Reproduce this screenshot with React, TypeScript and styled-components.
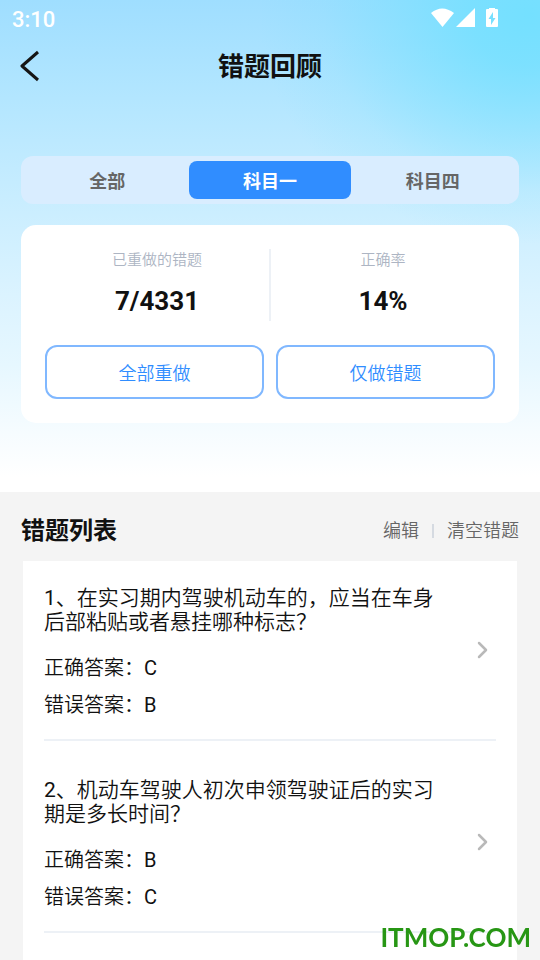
import React, { useState } from 'react';
import styled, { createGlobalStyle } from 'styled-components';

const GlobalStyle = createGlobalStyle`
  * { box-sizing: border-box; }
  body {
    margin: 0;
    background: #f4f4f4;
    color: #111;
    font-family: Roboto, 'Noto Sans CJK SC', sans-serif;
    font-weight: 350;
  }
  h1, h2, p, ul, ol, dl, dd { margin: 0; padding: 0; }
  button { border: 0; padding: 0; background: none; color: inherit; font: inherit; cursor: pointer; }
`;

const Screen = styled.div`
  height: 100vh;
  display: flex;
  flex-direction: column;
  overflow: hidden;
`;

const Hero = styled.header`
  flex: none;
  padding-bottom: 69px;
  background:
    radial-gradient(ellipse 270px 230px at 98% 3%, #74e0ff 0%, rgba(116, 224, 255, 0.85) 22%, rgba(116, 224, 255, 0.5) 48%, rgba(116, 224, 255, 0.15) 76%, rgba(116, 224, 255, 0) 100%),
    linear-gradient(180deg, #9fdeff 0%, #b3e6ff 20%, #c8edff 40%, #dbf3ff 60%, #e6f7ff 74%, #f6fcff 88%, #fff 97%);
`;

const StatusBar = styled.div`
  display: flex;
  justify-content: space-between;
  align-items: center;
  height: 38px;
  padding: 0 42px 0 12px;
  color: #fff;
  font-size: 22px;
  font-weight: 500;
`;

const StatusIcons = styled.svg`
  display: block;
  width: 68px;
  height: 22px;
`;

const NavBar = styled.div`
  display: grid;
  grid-template-columns: 60px 1fr 60px;
  align-items: center;
  height: 56px;
`;

const BackButton = styled.button`
  display: flex;
  padding-left: 20px;
  svg { display: block; }
`;

const Title = styled.h1`
  text-align: center;
  padding-top: 2px;
  font-size: 26px;
  line-height: 32px;
  font-weight: 700;
`;

const Tabs = styled.div`
  display: grid;
  grid-template-columns: repeat(3, 1fr);
  margin: 62px 21px 21px;
  padding: 5px;
  border-radius: 12px;
  background: #d9edff;
`;

const Tab = styled.button<{ $active: boolean }>`
  height: 38px;
  border-radius: 8px;
  font-size: 18px;
  font-weight: 700;
  color: ${({ $active }) => ($active ? '#fff' : '#666')};
  background: ${({ $active }) => ($active ? '#308dff' : 'transparent')};
`;

const Card = styled.section`
  margin: 0 21px;
  padding: 24px;
  border-radius: 15px;
  background: #fff;
`;

const Stats = styled.dl`
  display: flex;
  height: 72px;
  margin-bottom: 24px;
`;

const Stat = styled.div`
  flex: 1;
  text-align: center;
  & + & { border-left: 2px solid #edf1f6; }
`;

const StatLabel = styled.dt`
  font-size: 15px;
  line-height: 22px;
  color: #adb5c3;
`;

const StatValue = styled.dd`
  padding-top: 14px;
  font-size: 26px;
  line-height: 32px;
  font-weight: 700;
`;

const Actions = styled.div`
  display: grid;
  grid-template-columns: 1fr 1fr;
  gap: 12px;
`;

const OutlineButton = styled.button`
  height: 54px;
  border: 2px solid #80b8ff;
  border-radius: 12px;
  font-size: 18px;
  color: #308dff;
`;

const ListHeader = styled.div`
  flex: none;
  display: flex;
  align-items: center;
  justify-content: space-between;
  height: 69px;
  padding: 8px 21px 0;
`;

const ListTitle = styled.h2`
  font-size: 24px;
  line-height: 32px;
  font-weight: 700;
`;

const ListTools = styled.div`
  display: flex;
  align-items: center;
  gap: 13px;
  font-size: 18px;
  line-height: 24px;
  color: #666;
`;

const ToolDivider = styled.span`
  width: 2px;
  height: 14px;
  background: #d5dae1;
`;

const List = styled.ol`
  flex: 1;
  min-height: 0;
  overflow: hidden;
  margin: 0 23px;
  padding: 0 21px;
  list-style: none;
  background: #fff;
`;

const Item = styled.li`
  display: flex;
  align-items: center;
  justify-content: space-between;
  padding: 37px 0 22px;
  border-bottom: 2px solid #edf1f6;
  &:first-child { padding-top: 25px; }
`;

const ItemBody = styled.div`
  flex: 1;
  max-width: 396px;
`;

const Question = styled.p`
  margin-bottom: 22px;
  font-size: 21px;
  line-height: 24px;
`;

const Answer = styled.p`
  font-size: 20px;
  line-height: 24px;
  & + & { margin-top: 13px; }
`;

const Regular = styled.span`
  font-weight: 400;
`;

const OpenButton = styled.button`
  padding: 0 8px 3px 0;
  svg { display: block; }
`;

const Watermark = styled.div`
  position: fixed;
  right: 9px;
  bottom: 6px;
  font-family: Lato, sans-serif;
  font-size: 26px;
  line-height: 34px;
  font-weight: 700;
  color: #279614;
`;

const tabs = ['全部', '科目一', '科目四'];

const questions = [
  { text: '在实习期内驾驶机动车的，应当在车身后部粘贴或者悬挂哪种标志？', right: 'C', wrong: 'B' },
  { text: '机动车驾驶人初次申领驾驶证后的实习期是多长时间？', right: 'B', wrong: 'C' },
];

export default function App() {
  const [active, setActive] = useState('科目一');

  return (
    <Screen lang="zh-CN">
      <GlobalStyle />
      <Hero>
        <StatusBar>
          <span>3:10</span>
          <StatusIcons viewBox="0 0 68 22" fill="#fff" aria-hidden="true">
            <path d="M1 5Q12 -4 24 5L12.500 19Z" />
            <path d="M45 0V19H26Z" />
            <path fillRule="evenodd" d="M59 -1h6v2h2q1 0 1 1v16q0 1-1 1H57q-1 0-1-1V2q0-1 1-1h2ZM63 4l-4.500 7h2.500v6l4.500-7h-2.500Z" />
          </StatusIcons>
        </StatusBar>
        <NavBar>
          <BackButton aria-label="返回">
            <svg width="20" height="32" viewBox="0 0 20 32" fill="none" stroke="#151515" strokeWidth="3">
              <path d="M18 2L2 16L18 30" strokeLinejoin="round" />
            </svg>
          </BackButton>
          <Title>错题回顾</Title>
        </NavBar>
        <Tabs role="tablist">
          {tabs.map((name) => (
            <Tab
              key={name}
              role="tab"
              aria-selected={name === active}
              $active={name === active}
              onClick={() => setActive(name)}
            >
              {name}
            </Tab>
          ))}
        </Tabs>
        <Card>
          <Stats>
            <Stat>
              <StatLabel>已重做的错题</StatLabel>
              <StatValue>7/4331</StatValue>
            </Stat>
            <Stat>
              <StatLabel>正确率</StatLabel>
              <StatValue>14%</StatValue>
            </Stat>
          </Stats>
          <Actions>
            <OutlineButton>全部重做</OutlineButton>
            <OutlineButton>仅做错题</OutlineButton>
          </Actions>
        </Card>
      </Hero>
      <ListHeader>
        <ListTitle>错题列表</ListTitle>
        <ListTools>
          <button>编辑</button>
          <ToolDivider />
          <button>清空错题</button>
        </ListTools>
      </ListHeader>
      <List>
        {questions.map((q, i) => (
          <Item key={q.text}>
            <ItemBody>
              <Question>
                <Regular>{`${i + 1}、`}</Regular>
                {q.text}
              </Question>
              <Answer>正确答案：<Regular>{q.right}</Regular></Answer>
              <Answer>错误答案：<Regular>{q.wrong}</Regular></Answer>
            </ItemBody>
            <OpenButton aria-label="查看题目">
              <svg width="12" height="18" viewBox="0 0 12 18" fill="none" stroke="#b9b9b9" strokeWidth="2.500">
                <path d="M3 2L10 9L3 16" strokeLinecap="round" strokeLinejoin="round" />
              </svg>
            </OpenButton>
          </Item>
        ))}
      </List>
      <Watermark>ITMOP.COM</Watermark>
    </Screen>
  );
}
